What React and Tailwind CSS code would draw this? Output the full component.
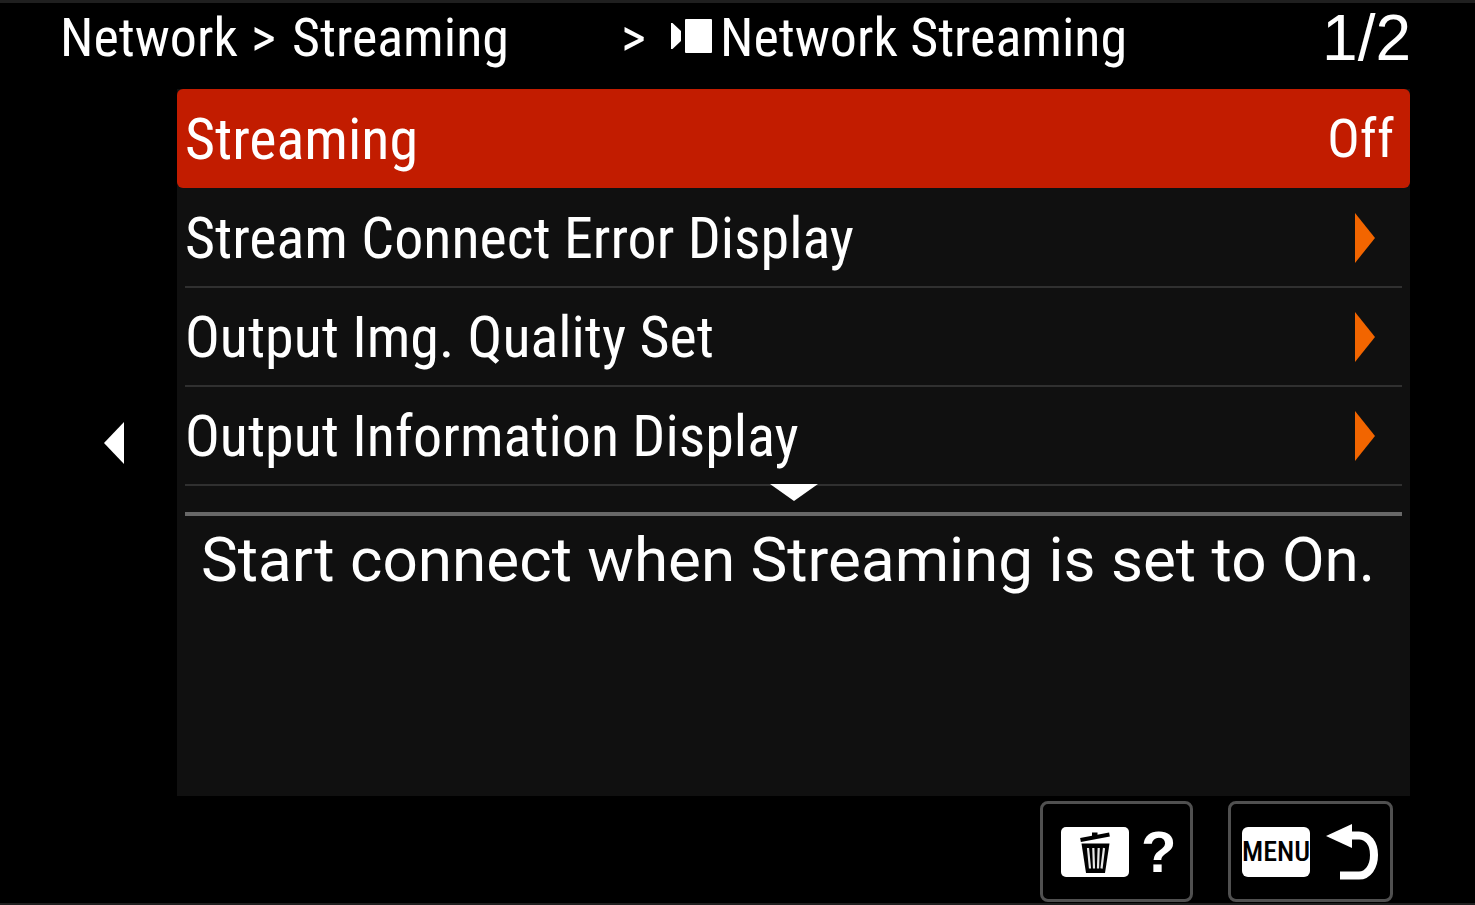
const items = ["Stream Connect Error Display", "Output Img. Quality Set", "Output Information Display"];

function Header() {
  return (
    <header className="flex h-[86px] items-start justify-between pl-[60px] pr-16 text-[54px] leading-[70px]">
      <nav aria-label="Breadcrumb" className="flex items-start whitespace-nowrap">
        <a href="#network" className="w-[191px]">Network</a>
        <span className="w-[41px]">&gt;</span>
        <a href="#streaming" className="w-[329px]">Streaming</a>
        <span className="w-[49px]">&gt;</span>
        <svg viewBox="0 0 44 36" className="mt-4 mr-1.5 h-9 w-11 shrink-0" fill="white" aria-hidden="true">
          <path d="M1 4h1.500l8.500 8v10l-8.500 8H1z" />
          <rect x="15" y="0" width="27" height="34" rx="1" />
        </svg>
        <h1>Network Streaming</h1>
      </nav>
      <span className="font-['Liberation_Sans'] text-[64px]">1/2</span>
    </header>
  );
}

function MenuRow({ label }) {
  return (
    <li className="mx-2 h-[99px] border-b-2 border-[#303030]">
      <button type="button" className="flex h-full w-full items-center justify-between pr-[27px] text-left">
        <span>{label}</span>
        <svg viewBox="0 0 20 50" className="h-[50px] w-5" fill="#f26500" aria-hidden="true">
          <path d="M0 0L20 25L0 50z" />
        </svg>
      </button>
    </li>
  );
}

function TrashIcon() {
  return (
    <svg viewBox="0 0 68 50" className="h-[50px] w-[68px] shrink-0" aria-hidden="true">
      <rect width="68" height="50" rx="5" fill="white" />
      <path d="M19.500 13L48.500 7.500" stroke="black" strokeWidth="4" />
      <path d="M31 5.500h5.500v5h-5.500z" />
      <path d="M20.500 16.500h28l-4.500 29.500H25z" />
      <path d="M27 21l2 20.500M32.300 21l.7 20.500M37.700 21l-.7 20.500M43 21l-2.500 20.500" stroke="#e8e8e8" strokeWidth="2.200" />
    </svg>
  );
}

export default function App() {
  return (
    <div className="flex min-h-screen flex-col border-t-3 border-b-2 border-[#1f1f1f] bg-black font-['Roboto_Condensed','Liberation_Sans',sans-serif] text-white">
      <Header />
      <div className="flex">
        <div className="flex w-[177px] shrink-0 items-center pl-[104px]">
          <button type="button" aria-label="Previous page">
            <svg viewBox="0 0 20 42" className="h-[42px] w-5" fill="white" aria-hidden="true">
              <path d="M20 0L0 21L20 42z" />
            </svg>
          </button>
        </div>
        <main className="mr-[65px] min-h-[707px] grow bg-[#101010] text-[58px] leading-[72px]">
          <ul>
            <li className="pb-px">
              <button type="button" className="flex h-[99px] w-full items-center justify-between rounded-md bg-[#c21c00] pl-2 pr-4 text-left">
                <span>Streaming</span>
                <span className="text-[54px]">Off</span>
              </button>
            </li>
            {items.map((label) => <MenuRow key={label} label={label} />)}
          </ul>
          <div className="mx-2 flex h-[30px] items-start justify-center border-b-4 border-[#686868]">
            <svg viewBox="0 0 48 17" className="-mt-0.5 h-[17px] w-12" fill="white" aria-hidden="true">
              <path d="M0 0h48L24 17z" />
            </svg>
          </div>
          <p className="px-6 pt-2 font-['Roboto'] text-[62px]">Start connect when Streaming is set to On.</p>
        </main>
      </div>
      <footer className="mt-[5px] mr-[82px] flex justify-end gap-[35px]">
        <button type="button" aria-label="Help" className="flex h-[101px] w-[153px] items-center gap-3 rounded-lg border-3 border-[#505050] pl-[18px]">
          <TrashIcon />
          <span className="font-['Liberation_Sans'] text-[58px] leading-[64px] font-bold">?</span>
        </button>
        <button type="button" aria-label="Back" className="flex h-[101px] w-[165px] items-center gap-4 rounded-lg border-3 border-[#505050] pl-[11px]">
          <span className="flex h-[50px] w-[68px] shrink-0 items-center justify-center rounded-md bg-white text-[28px] font-medium text-black">MENU</span>
          <svg viewBox="0 0 52 56" className="h-14 w-[52px] shrink-0" aria-hidden="true">
            <path d="M0 12L26 0v24z" fill="white" />
            <path d="M24 11.500h9c9 0 15 8 15 19.500s-6 20.500-15 20.500H14" fill="none" stroke="white" strokeWidth="8" />
          </svg>
        </button>
      </footer>
    </div>
  );
}
